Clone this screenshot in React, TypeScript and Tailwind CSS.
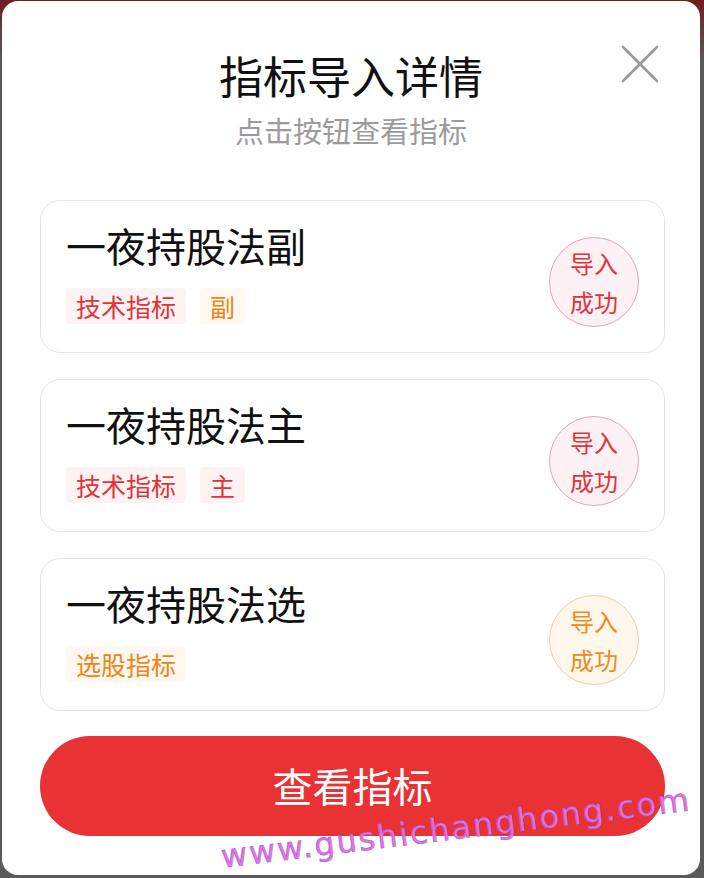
import React from "react";

type Item = {
  title: string;
  tags: { text: string; tone: "red" | "orange" }[];
  tone: "red" | "orange";
};

const items: Item[] = [
  { title: "一夜持股法副", tags: [{ text: "技术指标", tone: "red" }, { text: "副", tone: "orange" }], tone: "red" },
  { title: "一夜持股法主", tags: [{ text: "技术指标", tone: "red" }, { text: "主", tone: "red" }], tone: "red" },
  { title: "一夜持股法选", tags: [{ text: "选股指标", tone: "orange" }], tone: "orange" },
];

function Tag({ text, tone }: { text: string; tone: "red" | "orange" }) {
  return (
    <span
      className={
        tone === "red"
          ? "h-[36px] px-[10px] flex items-center rounded-[4px] bg-[#fdf3f3] text-[#e2323a] text-[25px] leading-none"
          : "h-[36px] px-[10px] flex items-center rounded-[4px] bg-[#fff8f0] text-[#ef8414] text-[25px] leading-none"
      }
    >
      {text}
    </span>
  );
}

function Badge({ tone }: { tone: "red" | "orange" }) {
  return (
    <div
      className={
        tone === "red"
          ? "mt-[11px] w-[90px] h-[90px] rounded-full border border-[#e6a6b0] bg-[#fdf1f3] text-[#e0333f] flex flex-col items-center justify-center text-[24px] leading-[39px]"
          : "mt-[11px] w-[90px] h-[90px] rounded-full border border-[#f2cca2] bg-[#fff6ec] text-[#ef8a1c] flex flex-col items-center justify-center text-[24px] leading-[39px]"
      }
    >
      <span>导入</span>
      <span>成功</span>
    </div>
  );
}

export default function App() {
  return (
    <div
      className="w-[704px] h-[878px] bg-[linear-gradient(180deg,#6e1d1d_0px,#5a5a5a_60px,#5a5a5a_100%)] pt-[1px] pl-[2px] overflow-hidden"
      style={{ fontFamily: '"Noto Sans CJK SC", "Noto Sans", sans-serif' }}
    >
      <div className="relative w-[698px] h-[874px] rounded-[16px] bg-white overflow-hidden">
        <div className="flex flex-col items-center pt-[48px]">
          <h1 className="text-[44px] leading-[52px] text-[#111] font-normal">指标导入详情</h1>
          <p className="mt-[11px] text-[29px] leading-[36px] text-[#9b9b9b]">点击按钮查看指标</p>
        </div>

        <button className="absolute left-[618px] top-[43px] w-[40px] h-[40px]" aria-label="close">
          <svg width="40" height="40" viewBox="0 0 40 40">
            <path d="M3 3 L37 37 M37 3 L3 37" stroke="#9a9a9a" strokeWidth="2.6" strokeLinecap="round" fill="none" />
          </svg>
        </button>

        <div className="mt-[52px] ml-[38px] w-[625px] flex flex-col gap-[26px]">
          {items.map((it) => (
            <div
              key={it.title}
              className="h-[153px] rounded-[20px] border border-[#e4e4e4] bg-white flex items-center justify-between pl-[25px] pr-[25px]"
            >
              <div className="flex flex-col self-start pt-[20px]">
                <div className="text-[40px] leading-[48px] text-[#111]">{it.title}</div>
                <div className="mt-[19px] flex gap-[14px]">
                  {it.tags.map((t) => (
                    <Tag key={t.text} text={t.text} tone={t.tone} />
                  ))}
                </div>
              </div>
              <Badge tone={it.tone} />
            </div>
          ))}
        </div>

        <button className="mt-[25px] ml-[38px] w-[625px] h-[100px] rounded-full bg-[#e83234] text-white text-[40px] leading-none pb-[2px] flex items-center justify-center">
          查看指标
        </button>

        <div
          className="absolute left-[216px] top-[805px] w-[476px] h-[44px] rotate-[-7deg] text-center text-[32px] leading-[44px] tracking-[2px] text-[#f56ad6] [-webkit-text-stroke:0.5px_#6f6cf0] pointer-events-none whitespace-nowrap"
          style={{ fontFamily: '"DejaVu Sans", sans-serif' }}
        >
          www.gushichanghong.com
        </div>
      </div>
    </div>
  );
}
